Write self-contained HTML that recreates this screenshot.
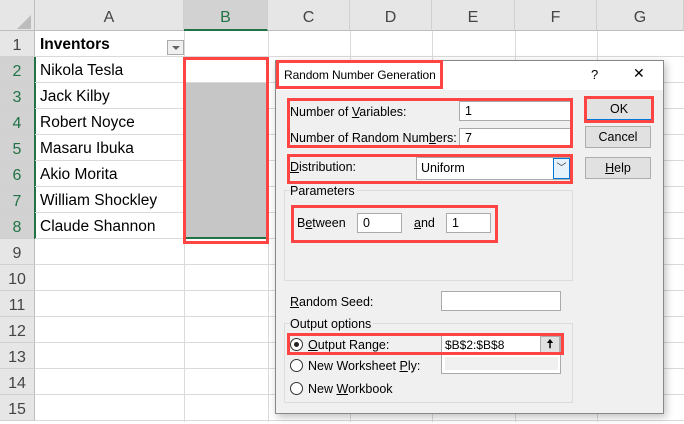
<!DOCTYPE html><html><head><style>
*{box-sizing:border-box;margin:0;padding:0}
body{width:684px;height:422px;overflow:hidden;background:#fff;position:relative;font-family:"Liberation Sans",sans-serif}
.a{position:absolute}
.ch{top:0;height:31px;background:#e6e6e6;border-right:1px solid #d0d0d0;border-bottom:1px solid #bdbdbd;text-align:center;line-height:36px;font-size:16px;color:#444}
.rh{left:0;width:35px;height:26px;background:#e6e6e6;border-bottom:1px solid #d0d0d0;border-right:1px solid #bdbdbd;text-align:center;line-height:29px;font-size:16px;color:#444}
.hl{height:1px;background:#dadada;left:35px;right:0}
.vl{width:1px;background:#dadada;top:31px;bottom:0}
.cell{left:40px;font-size:15.5px;line-height:30px;color:#000}
.red{border:3px solid #f44;}
.d{font-size:12.5px;color:#000}
.in{background:#fff;border:1px solid #aaa;font-size:12.5px;padding-left:5px;line-height:18px}
.btn{background:#e1e1e1;border:1px solid #adadad;font-size:12.5px;text-align:center;line-height:20px}
.rad{width:13px;height:13px;border:1px solid #333;border-radius:50%;background:#fff}
u{text-decoration:underline}
</style></head><body>
<div class="a" style="left:0;top:0;width:35px;height:31px;background:#e6e6e6;border-right:1px solid #bdbdbd;border-bottom:1px solid #bdbdbd"></div>
<div class="a" style="left:17px;top:15px;width:0;height:0;border-left:14px solid transparent;border-bottom:14px solid #bcbcbc"></div>
<div class="a ch" style="left:35px;width:149px">A</div>
<div class="a ch" style="left:184px;width:84px;background:#d2d2d2;color:#217346;border-bottom:2px solid #217346">B</div>
<div class="a ch" style="left:268px;width:82px">C</div>
<div class="a ch" style="left:350px;width:82px">D</div>
<div class="a ch" style="left:432px;width:83px">E</div>
<div class="a ch" style="left:515px;width:82px">F</div>
<div class="a ch" style="left:597px;width:87px">G</div>
<div class="a rh" style="top:31px">1</div>
<div class="a rh" style="top:57px;background:#d2d2d2;color:#217346">2</div>
<div class="a rh" style="top:83px;background:#d2d2d2;color:#217346">3</div>
<div class="a rh" style="top:109px;background:#d2d2d2;color:#217346">4</div>
<div class="a rh" style="top:135px;background:#d2d2d2;color:#217346">5</div>
<div class="a rh" style="top:161px;background:#d2d2d2;color:#217346">6</div>
<div class="a rh" style="top:187px;background:#d2d2d2;color:#217346">7</div>
<div class="a rh" style="top:213px;background:#d2d2d2;color:#217346">8</div>
<div class="a rh" style="top:239px">9</div>
<div class="a rh" style="top:265px">10</div>
<div class="a rh" style="top:291px">11</div>
<div class="a rh" style="top:317px">12</div>
<div class="a rh" style="top:343px">13</div>
<div class="a rh" style="top:369px">14</div>
<div class="a rh" style="top:395px">15</div>
<div class="a" style="left:34px;top:57px;width:2px;height:182px;background:#217346"></div>
<div class="a hl" style="top:56px"></div><div class="a hl" style="top:82px"></div><div class="a hl" style="top:108px"></div><div class="a hl" style="top:134px"></div><div class="a hl" style="top:160px"></div><div class="a hl" style="top:186px"></div><div class="a hl" style="top:212px"></div><div class="a hl" style="top:238px"></div><div class="a hl" style="top:264px"></div><div class="a hl" style="top:290px"></div><div class="a hl" style="top:316px"></div><div class="a hl" style="top:342px"></div><div class="a hl" style="top:368px"></div><div class="a hl" style="top:394px"></div><div class="a hl" style="top:420px"></div>
<div class="a vl" style="left:184px"></div><div class="a vl" style="left:268px"></div><div class="a vl" style="left:350px"></div><div class="a vl" style="left:432px"></div><div class="a vl" style="left:515px"></div><div class="a vl" style="left:597px"></div>
<div class="a" style="left:185px;top:83px;width:82px;height:156px;background:#c6c6c6"></div>
<div class="a" style="left:184px;top:237px;width:84px;height:2px;background:#217346"></div>
<div class="a cell" style="top:30px;font-weight:bold">Inventors</div>
<div class="a" style="left:167px;top:40px;width:17px;height:15px;border:1px solid #aaa;background:#f0f0f0"><div class="a" style="left:4px;top:5px;border-left:4px solid transparent;border-right:4px solid transparent;border-top:4px solid #666"></div></div>
<div class="a cell" style="top:56px">Nikola Tesla</div>
<div class="a cell" style="top:82px">Jack Kilby</div>
<div class="a cell" style="top:108px">Robert Noyce</div>
<div class="a cell" style="top:134px">Masaru Ibuka</div>
<div class="a cell" style="top:160px">Akio Morita</div>
<div class="a cell" style="top:186px">William Shockley</div>
<div class="a cell" style="top:212px">Claude Shannon</div>
<div class="a red" style="left:183px;top:57px;width:86px;height:187px"></div>

<div class="a" style="left:275px;top:60px;width:389px;height:354px;background:#f0f0f0;border:1px solid #888;box-shadow:2px 3px 8px rgba(0,0,0,.25)"></div>
<div class="a" style="left:276px;top:61px;width:387px;height:29px;background:#fff"></div>
<div class="a d" style="left:284px;top:68px;font-size:12px;letter-spacing:-0.1px">Random Number Generation</div>
<div class="a d" style="left:591px;top:67px;font-size:13px">?</div>
<div class="a d" style="left:633px;top:65px;font-size:14px">✕</div>
<div class="a red" style="left:276px;top:60px;width:167px;height:29px"></div>
<div class="a d" style="left:290px;top:105px">Number of <u>V</u>ariables:</div>
<div class="a in" style="left:459px;top:101px;width:112px;height:20px">1</div>
<div class="a d" style="left:290px;top:131px">Number of Random Num<u>b</u>ers:</div>
<div class="a in" style="left:459px;top:128px;width:112px;height:20px">7</div>
<div class="a red" style="left:287px;top:98px;width:286px;height:50px"></div>
<div class="a btn" style="left:586px;top:98px;width:66px;height:22px;border:1px solid #0078d7">OK</div>
<div class="a red" style="left:584px;top:96px;width:70px;height:27px"></div>
<div class="a btn" style="left:585px;top:126px;width:66px;height:22px">Cancel</div>
<div class="a btn" style="left:585px;top:157px;width:66px;height:22px"><u>H</u>elp</div>
<div class="a d" style="left:290px;top:160px"><u>D</u>istribution:</div>
<div class="a in" style="left:416px;top:157px;width:154px;height:23px;line-height:21px;padding-left:4px">Uniform</div>
<div class="a" style="left:553px;top:158px;width:17px;height:21px;background:#e5f1fb;border:1px solid #0078d7;font-size:10px;text-align:center;line-height:19px;color:#333">﹀</div>
<div class="a red" style="left:287px;top:154px;width:286px;height:30px"></div>
<div class="a" style="left:284px;top:190px;width:289px;height:91px;border:1px solid #dcdcdc"></div>
<div class="a d" style="left:290px;top:184px;background:#f0f0f0;padding-right:2px">Parameters</div>
<div class="a d" style="left:297px;top:216px">B<u>e</u>tween</div>
<div class="a in" style="left:357px;top:213px;width:45px;height:20px">0</div>
<div class="a d" style="left:414px;top:216px"><u>a</u>nd</div>
<div class="a in" style="left:446px;top:213px;width:45px;height:20px">1</div>
<div class="a red" style="left:291px;top:205px;width:207px;height:38px"></div>
<div class="a d" style="left:290px;top:295px"><u>R</u>andom Seed:</div>
<div class="a in" style="left:441px;top:291px;width:120px;height:20px"></div>
<div class="a" style="left:284px;top:323px;width:289px;height:80px;border:1px solid #dcdcdc"></div>
<div class="a d" style="left:290px;top:317px;background:#f0f0f0;padding-right:2px">Output options</div>
<div class="a rad" style="left:290px;top:338px"><div class="a" style="left:3px;top:3px;width:5px;height:5px;border-radius:50%;background:#222"></div></div>
<div class="a d" style="left:308px;top:338px"><u>O</u>utput Range:</div>
<div class="a in" style="left:441px;top:335px;width:120px;height:19px;font-size:12px;padding-left:3px">$B$2:$B$8</div>
<div class="a" style="left:540px;top:336px;width:20px;height:17px;background:#e1e1e1;border:1px solid #adadad;font-size:12px;text-align:center;line-height:15px;font-weight:bold">🠅</div>
<div class="a red" style="left:287px;top:333px;width:277px;height:22px"></div>
<div class="a rad" style="left:290px;top:359px"></div>
<div class="a d" style="left:308px;top:359px">New Worksheet <u>P</u>ly:</div>
<div class="a" style="left:441px;top:355px;width:120px;height:19px;background:#fff;border:1px solid #aaa;border-top:none"><div class="a" style="left:3px;top:2px;right:2px;bottom:3px;background:#f0f0f0"></div></div>
<div class="a rad" style="left:290px;top:382px"></div>
<div class="a d" style="left:308px;top:382px">New <u>W</u>orkbook</div>
</body></html>
